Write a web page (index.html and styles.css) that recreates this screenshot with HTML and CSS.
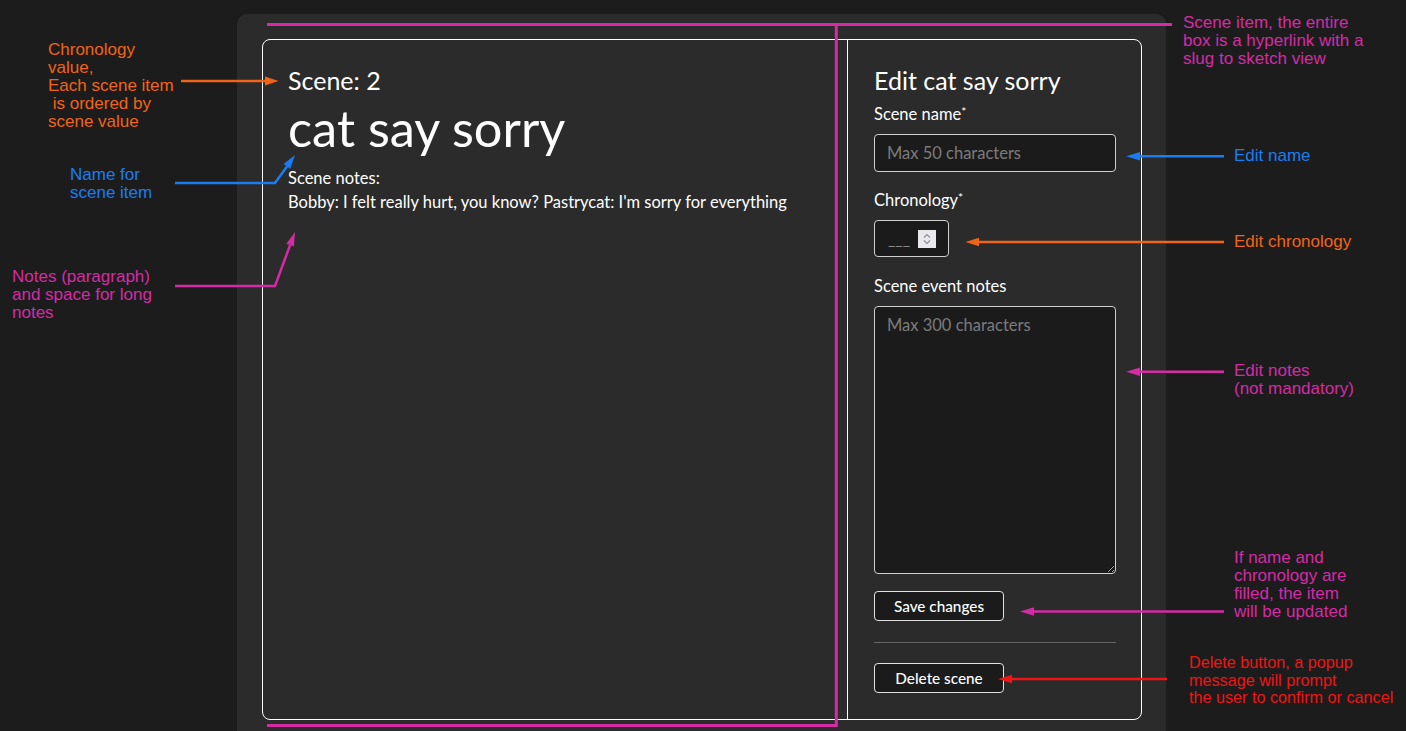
FILE: index.html
```html
<!DOCTYPE html>
<html lang="en">
<head>
<meta charset="utf-8">
<title>Scene item</title>
<link rel="stylesheet" href="styles.css">
</head>
<body>
<div class="stage">
  <main class="panel">
    <div class="card">
      <section class="scene">
        <h3 class="scene-num">Scene: 2</h3>
        <h1 class="scene-title">cat say sorry</h1>
        <p class="notes-label">Scene notes:</p>
        <p class="notes">Bobby: I felt really hurt, you know? Pastrycat: I'm sorry for everything</p>
      </section>
      <section class="edit">
        <h2 class="edit-title">Edit cat say sorry</h2>
        <label class="lbl">Scene name<span class="req">*</span></label>
        <input class="field" type="text" placeholder="Max 50 characters">
        <label class="lbl gap">Chronology<span class="req">*</span></label>
        <div class="numbox">
          <span class="num-ph">___</span>
          <svg class="spin" width="18" height="18" viewBox="0 0 18 18"><rect width="18" height="18" fill="#e9e9ed"/><path d="M6 7.5 L9 4.5 L12 7.5" fill="none" stroke="#8d8d92" stroke-width="1.2"/><path d="M6 10.5 L9 13.5 L12 10.5" fill="none" stroke="#8d8d92" stroke-width="1.2"/></svg>
        </div>
        <label class="lbl gap2">Scene event notes</label>
        <textarea class="area" placeholder="Max 300 characters"></textarea>
        <button class="btn save" type="button">Save changes</button>
        <hr class="rule">
        <button class="btn" type="button">Delete scene</button>
      </section>
    </div>
  </main>

  <svg class="arrows" width="1406" height="731" viewBox="0 0 1406 731">
    <g stroke="#d52ba6" stroke-width="3" fill="none">
      <path d="M267 24.5 H1172"/>
      <path d="M836.3 24.5 V725.5"/>
      <path d="M267 725.5 H837.8"/>
    </g>
    <g stroke-width="2.5" fill="none">
      <path d="M181 81 H266" stroke="#f06418"/>
      <path d="M175 183 H275 L287 166.4" stroke="#1b7cf2"/>
      <path d="M175 286 H275 L290.1 245.1" stroke="#d52ba6"/>
      <path d="M1140 156.3 H1224" stroke="#1b7cf2"/>
      <path d="M979 242 H1224" stroke="#f06418"/>
      <path d="M1140 371.8 H1224" stroke="#d52ba6"/>
      <path d="M1034 611.5 H1224" stroke="#d52ba6"/>
      <path d="M1012 679 H1167" stroke="#ef1515"/>
    </g>
    <polygon points="278.5,81 265,76.5 265,85.5" fill="#f06418"/>
    <polygon points="295,155 290.2,168.7 283.6,164.1" fill="#1b7cf2"/>
    <polygon points="295,232 293.9,246.5 286.4,243.7" fill="#d52ba6"/>
    <polygon points="1126,156.3 1140,152 1140,160.6" fill="#1b7cf2"/>
    <polygon points="965.5,242 979,237.7 979,246.3" fill="#f06418"/>
    <polygon points="1126,371.8 1140,367.5 1140,376.1" fill="#d52ba6"/>
    <polygon points="1020,611.5 1034,607.2 1034,615.8" fill="#d52ba6"/>
    <polygon points="998,679 1012,674.7 1012,683.3" fill="#ef1515"/>
  </svg>

  <div class="note orange n-chrono">Chronology<br>value,<br>Each scene item<br>&nbsp;is ordered by<br>scene value</div>
  <div class="note blue n-name">Name for<br>scene item</div>
  <div class="note magenta n-notes">Notes (paragraph)<br>and space for long<br>notes</div>
  <div class="note magenta n-item">Scene item, the entire<br>box is a hyperlink with a<br>slug to sketch view</div>
  <div class="note blue n-editname">Edit name</div>
  <div class="note orange n-editchrono">Edit chronology</div>
  <div class="note magenta n-editnotes">Edit notes<br>(not mandatory)</div>
  <div class="note magenta n-update">If name and<br>chronology are<br>filled, the item<br>will be updated</div>
  <div class="note red n-delete">Delete button, a popup<br>message will prompt<br>the user to confirm or cancel</div>
</div>
</body>
</html>
```

FILE: styles.css
```css
html, body {
  margin: 0;
  padding: 0;
}
body {
  background: #1c1c1c;
  color: #ffffff;
  font-family: Lato, "Open Sans", sans-serif;
  width: 1406px;
  height: 731px;
  overflow: hidden;
}
.stage {
  position: relative;
  width: 1406px;
  height: 731px;
  box-sizing: border-box;
  padding-top: 14px;
}
.panel {
  margin: 0 0 0 237px;
  width: 929px;
  height: 717px;
  box-sizing: border-box;
  padding: 25px 24px 0 25px;
  background: #2b2b2b;
  border-radius: 10px 10px 0 0;
}
.card {
  display: flex;
  width: 880px;
  height: 681px;
  box-sizing: border-box;
  border: 1px solid #ffffff;
  border-radius: 8px;
}
.scene {
  width: 585px;
  box-sizing: border-box;
  border-right: 1px solid #ffffff;
  padding: 24px 25px;
}
.scene-num {
  margin: 0;
  font-size: 25px;
  line-height: 32px;
  font-weight: 400;
}
.scene-title {
  margin: 2px 0 0;
  font-size: 50.5px;
  line-height: 60px;
  font-weight: 400;
}
.notes-label {
  margin: 8px 0 0;
  font-size: 16.5px;
  line-height: 24px;
}
.notes {
  margin: 0;
  font-size: 16.5px;
  line-height: 24px;
}
.edit {
  flex: 1;
  display: flex;
  flex-direction: column;
  align-items: flex-start;
  padding: 24px 25px 0 26px;
}
.edit-title {
  margin: 0;
  font-size: 25px;
  line-height: 32px;
  font-weight: 400;
}
.lbl {
  margin-top: 8px;
  font-size: 16.5px;
  line-height: 20px;
}
.lbl.gap {
  margin-top: 18px;
}
.lbl.gap2 {
  margin-top: 19px;
}
.req {
  font-size: 12px;
  vertical-align: 4px;
  line-height: 0;
}
.field {
  margin-top: 10px;
  width: 242px;
  height: 38px;
  box-sizing: border-box;
  padding: 0 12px;
  background: #1b1b1b;
  border: 1px solid #cfcfcf;
  border-radius: 4px;
  color: #fff;
  font-family: Lato, "Open Sans", sans-serif;
  font-size: 16.5px;
  outline: none;
}
.field::placeholder,
.area::placeholder {
  color: #7b7b7b;
}
.numbox {
  margin-top: 10px;
  width: 75px;
  height: 37px;
  box-sizing: border-box;
  display: flex;
  align-items: center;
  padding-left: 13px;
  background: #1b1b1b;
  border: 1px solid #cfcfcf;
  border-radius: 4px;
}
.num-ph {
  color: #8a8a8a;
  font-size: 16px;
  width: 30px;
}
.spin {
  display: block;
}
.area {
  margin-top: 10px;
  width: 242px;
  height: 268px;
  box-sizing: border-box;
  padding: 8px 12px;
  background: #1b1b1b;
  border: 1px solid #cfcfcf;
  border-radius: 4px;
  color: #fff;
  font-family: Lato, "Open Sans", sans-serif;
  font-size: 16.5px;
  line-height: 20px;
  resize: both;
  outline: none;
}
.btn {
  width: 130px;
  height: 30px;
  box-sizing: border-box;
  background: #1b1b1b;
  color: #fff;
  border: 1px solid #e2e2e2;
  border-radius: 4px;
  font-family: Lato, "Open Sans", sans-serif;
  font-size: 15.3px;
  font-weight: 500;
  padding: 0;
}
.btn.save {
  margin-top: 17px;
}
.rule {
  align-self: stretch;
  margin: 21px 0 20px;
  border: 0;
  border-top: 1px solid #666;
  height: 0;
}
.arrows {
  position: absolute;
  left: 0;
  top: 0;
  pointer-events: none;
}
.note {
  position: absolute;
  font-family: "Liberation Sans", Arial, sans-serif;
  font-size: 17px;
  line-height: 18px;
  white-space: nowrap;
}
.orange { color: #f06418; }
.blue { color: #1b7cf2; }
.magenta { color: #d52ba6; }
.red { color: #ef1515; }
.n-chrono { left: 48px; top: 41px; }
.n-name { left: 70px; top: 166px; }
.n-notes { left: 12px; top: 268px; }
.n-item { left: 1183px; top: 14px; }
.n-editname { left: 1234px; top: 147px; }
.n-editchrono { left: 1234px; top: 233px; }
.n-editnotes { left: 1234px; top: 362px; }
.n-update { left: 1234px; top: 549px; }
.n-delete { left: 1189px; top: 654px; font-size: 16.2px; line-height: 17.5px; }
```
